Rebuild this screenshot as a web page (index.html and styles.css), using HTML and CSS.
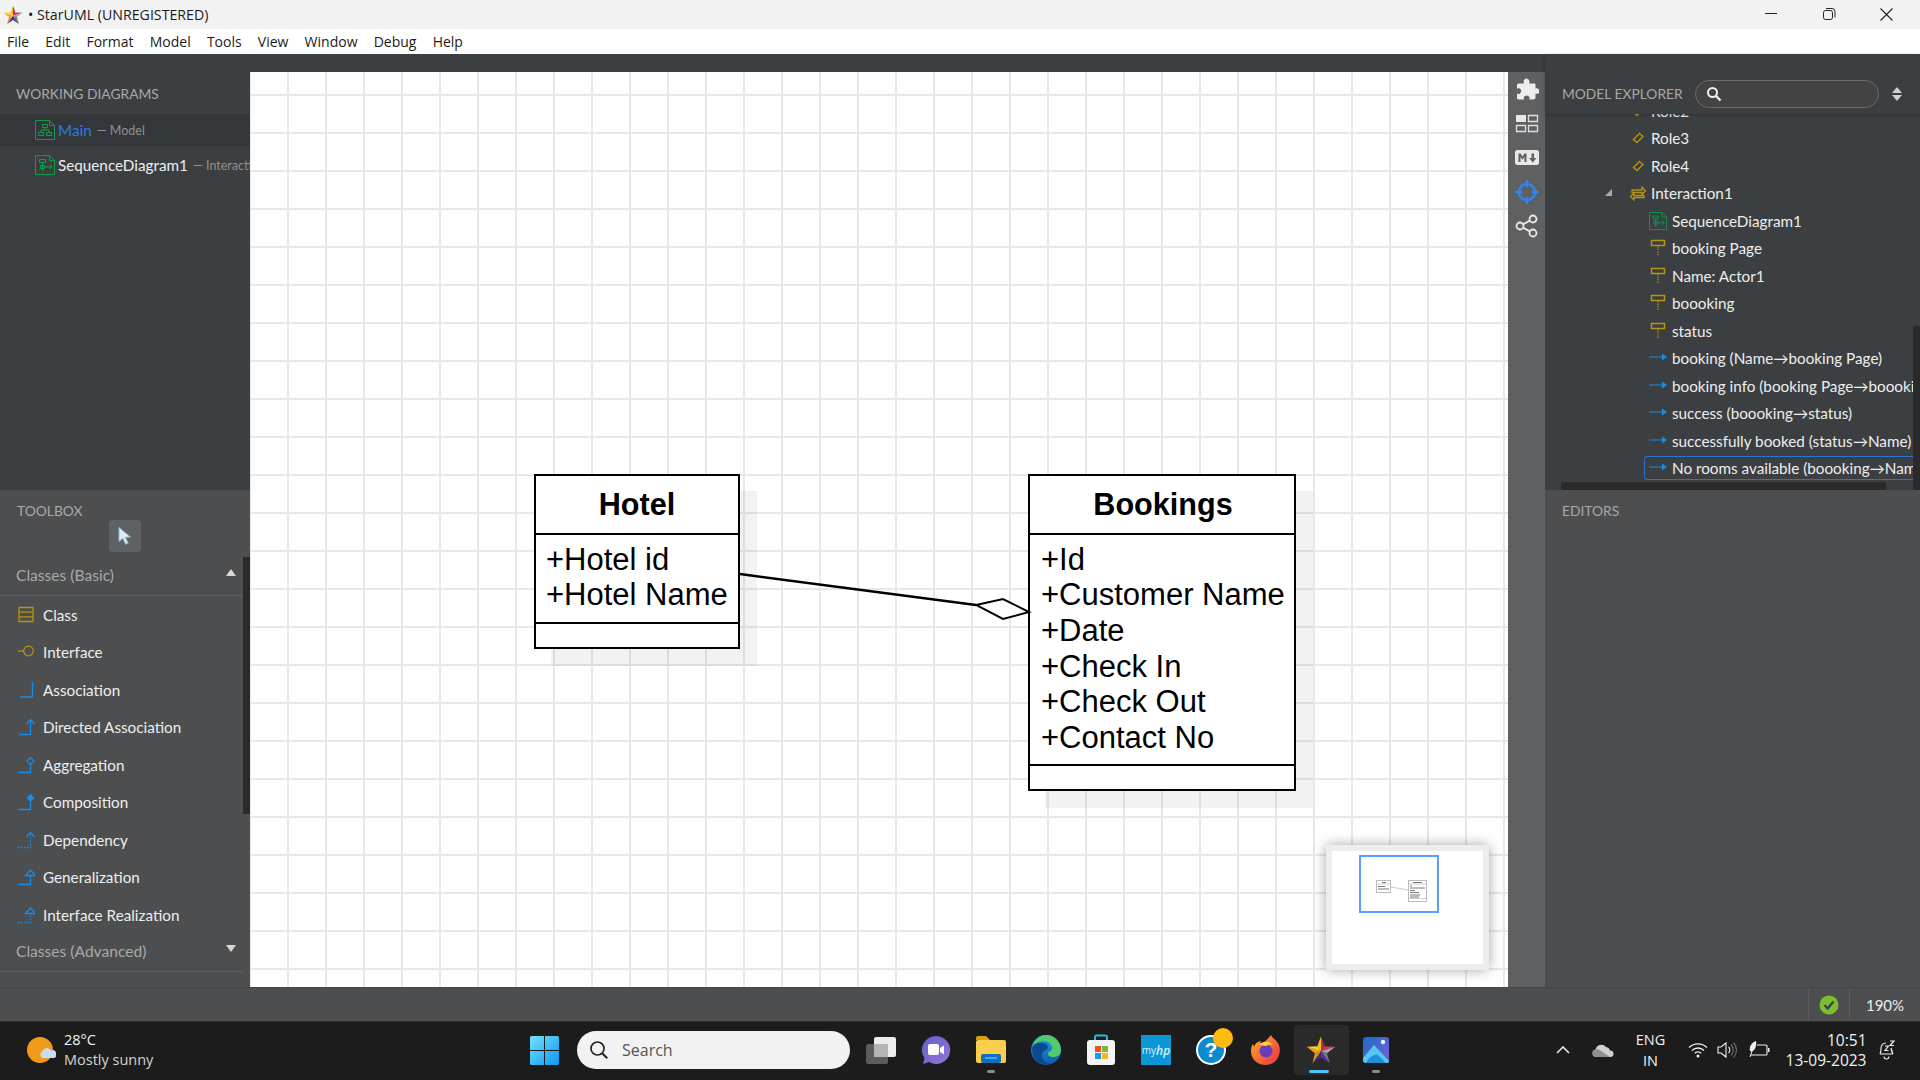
FILE: index.html
```html
<!DOCTYPE html>
<html lang="en">
<head>
  <meta charset="UTF-8" />
  <title>StarUML (UNREGISTERED)</title>
  <link rel="stylesheet" href="styles.css">
</head>
<body>
  <svg class="defs" width="0" height="0">
    <defs>
      <symbol id="star" viewBox="0 0 24 24">
        <polygon points="12,1 14.9,9 12,13" fill="#c2264f"/>
        <polygon points="12,1 9.1,9 12,13" fill="#f6c21c"/>
        <polygon points="14.9,9 23.4,9.3 12,13" fill="#d8344f"/>
        <polygon points="23.4,9.3 16.8,14.5 12,13" fill="#a9a9a9"/>
        <polygon points="16.8,14.5 19,22.7 12,13" fill="#77777c"/>
        <polygon points="19,22.7 12,18 12,13" fill="#5a2fa0"/>
        <polygon points="5,22.7 12,18 12,13" fill="#3a2a90"/>
        <polygon points="7.2,14.5 5,22.7 12,13" fill="#e0941a"/>
        <polygon points="0.6,9.3 7.2,14.5 12,13" fill="#f4a71e"/>
        <polygon points="9.1,9 0.6,9.3 12,13" fill="#fbd22e"/>
      </symbol>
      <symbol id="ic-model" viewBox="0 0 20 20">
        <path d="M.5.5h14l5 5v14H.5z M14.500.5v5h5" fill="none" stroke="#0f9b4a" stroke-width="1"/>
        <path d="M7.500 4.500h5v3h-5z M3.500 12.500h5v3h-5z M11.500 12.500h5v3h-5z M10 7.500v2.500 M6 12.500V10h8v2.500" fill="none" stroke="#0f9b4a" stroke-width="1"/>
      </symbol>
      <symbol id="ic-seq" viewBox="0 0 20 20">
        <path d="M.5.5h14l5 5v14H.5z M14.500.5v5h5" fill="none" stroke="#0f9b4a" stroke-width="1"/>
        <path d="M4.500 4.500h6v3h-6z M7.500 7.500v9 M5.500 10.500h4v3h-4z M9.500 12h7.500 M14.500 9.800l2.500 2.200-2.500 2.200" fill="none" stroke="#0f9b4a" stroke-width="1"/>
      </symbol>
      <symbol id="ic-role" viewBox="0 0 18 18">
        <path d="M10.500 4.500l3.500 3-6 6-3.500-3z" fill="none" stroke="#b8930f" stroke-width="1.400"/>
      </symbol>
      <symbol id="ic-inter" viewBox="0 0 18 18">
        <path d="M3 6h10V3l3.500 4-3.500 3.500V8.500H3z M15 11.500H5v-2.500L1.500 12.500 5 16v-2.500h10z" fill="none" stroke="#b8930f" stroke-width="1.300"/>
      </symbol>
      <symbol id="ic-life" viewBox="0 0 18 18">
        <path d="M2.500 1.500h13v5h-13z" fill="none" stroke="#b8930f" stroke-width="1.500"/>
        <path d="M9 7v10" fill="none" stroke="#b8930f" stroke-width="1.200" stroke-dasharray="1.500 1"/>
      </symbol>
      <symbol id="ic-msg" viewBox="0 0 18 18">
        <path d="M0 8h17 M13.500 5.500L17 8l-3.500 2.500z" fill="#1b8ce3" stroke="#1b8ce3" stroke-width="1.100"/>
      </symbol>
    </defs>
  </svg>

  <div class="window">
    <header class="titlebar">
      <svg class="title-star" width="20" height="20"><use href="#star"/></svg>
      <span class="title-text">• StarUML (UNREGISTERED)</span>
      <div class="win-btns">
        <svg width="58" height="29" viewBox="0 0 58 29"><path d="M24 13.500h12" stroke="#222" stroke-width="1"/></svg>
        <svg width="58" height="29" viewBox="0 0 58 29"><rect x="24.500" y="10.500" width="9" height="9" rx="2" fill="none" stroke="#222"/><path d="M27 8.500h6a3 3 0 0 1 3 3v6" fill="none" stroke="#222"/></svg>
        <svg width="58" height="29" viewBox="0 0 58 29"><path d="M23.500 8.500l12 12M35.500 8.500l-12 12" stroke="#222" stroke-width="1.100"/></svg>
      </div>
    </header>
    <nav class="menubar">
      <span>File</span><span>Edit</span><span>Format</span><span>Model</span><span>Tools</span><span>View</span><span>Window</span><span>Debug</span><span>Help</span>
    </nav>

    <main class="workspace">
      <aside class="sidebar">
        <section class="working">
          <h2 class="panel-title working-title">WORKING DIAGRAMS</h2>
          <div class="wd-row active">
            <svg width="20" height="20"><use href="#ic-model"/></svg>
            <span class="wd-name">Main</span><span class="wd-sub">— Model</span>
          </div>
          <div class="wd-row">
            <svg width="20" height="20"><use href="#ic-seq"/></svg>
            <span>SequenceDiagram1</span><span class="wd-sub">— Interaction1</span>
          </div>
        </section>
        <section class="toolbox">
          <h2 class="panel-title toolbox-title">TOOLBOX</h2>
          <button class="cursor-btn">
            <svg width="18" height="20" viewBox="0 0 18 20"><path d="M3 1.500v14l3.800-3.200 2.800 6 2.600-1.200-2.800-5.800 5-.4z" fill="#e8e8e8" stroke="#7cc4dc" stroke-width="1"/></svg>
          </button>
          <div class="tool-scroll"></div>
          <div class="tool-section"><span>Classes (Basic)</span><i class="tri up"></i></div>
          <div class="tool">
            <svg viewBox="0 0 18 18"><path d="M2 1.500h14v14H2z M2 6.200h14 M2 10.800h14" fill="none" stroke="#b8930f" stroke-width="1.300"/></svg>
            <span>Class</span>
          </div>
          <div class="tool">
            <svg viewBox="0 0 18 18"><circle cx="11.500" cy="8" r="4.800" fill="none" stroke="#b8930f" stroke-width="1.300"/><path d="M1 8h5.500" stroke="#b8930f" stroke-width="1.300"/></svg>
            <span>Interface</span>
          </div>
          <div class="tool">
            <svg viewBox="0 0 18 18"><path d="M3 16h12.500V1" fill="none" stroke="#1b8ce3" stroke-width="1.300"/></svg>
            <span>Association</span>
          </div>
          <div class="tool">
            <svg viewBox="0 0 18 18"><path d="M2 16.500h11.500V2 M9.500 6l4-4.500 4 4.500" fill="none" stroke="#1b8ce3" stroke-width="1.300"/></svg>
            <span>Directed Association</span>
          </div>
          <div class="tool">
            <svg viewBox="0 0 18 18"><path d="M1 16.500h12.500V8.500 M13.500 1.500l3.500 3.500-3.500 3.500L10 5z" fill="none" stroke="#1b8ce3" stroke-width="1.300"/></svg>
            <span>Aggregation</span>
          </div>
          <div class="tool">
            <svg viewBox="0 0 18 18"><path d="M1 16.500h12.500V8.500" fill="none" stroke="#1b8ce3" stroke-width="1.300"/><path d="M13.500 1l4 4-4 4-4-4z" fill="#1b8ce3"/></svg>
            <span>Composition</span>
          </div>
          <div class="tool">
            <svg viewBox="0 0 18 18"><path d="M1 16.500h12.500V2" fill="none" stroke="#1b8ce3" stroke-width="1.300" stroke-dasharray="1.500 1.500"/><path d="M9.500 6l4-4.500 4 4.500" fill="none" stroke="#1b8ce3" stroke-width="1.300"/></svg>
            <span>Dependency</span>
          </div>
          <div class="tool">
            <svg viewBox="0 0 18 18"><path d="M1 16.500h12.500V7.500 M8.500 7.500l5-5.500 5 5.500z" fill="none" stroke="#1b8ce3" stroke-width="1.300"/></svg>
            <span>Generalization</span>
          </div>
          <div class="tool">
            <svg viewBox="0 0 18 18"><path d="M1 16.500h12.500V7.500" fill="none" stroke="#1b8ce3" stroke-width="1.300" stroke-dasharray="1.500 1.500"/><path d="M8.500 7.500l5-5.500 5 5.500z" fill="none" stroke="#1b8ce3" stroke-width="1.300"/></svg>
            <span>Interface Realization</span>
          </div>
          <div class="tool-section"><span>Classes (Advanced)</span><i class="tri down"></i></div>
          <div class="tool-section cut"><span></span><i class="tri up"></i></div>
        </section>
      </aside>

      <div class="center">
        <div class="canvas">
          <div class="uml-class hotel">
            <div class="uml-name">Hotel</div>
            <div class="uml-attrs">
              <div>+Hotel id</div>
              <div>+Hotel Name</div>
            </div>
            <div class="uml-ops"></div>
          </div>
          <div class="uml-class bookings">
            <div class="uml-name">Bookings</div>
            <div class="uml-attrs">
              <div>+Id</div>
              <div>+Customer Name</div>
              <div>+Date</div>
              <div>+Check In</div>
              <div>+Check Out</div>
              <div>+Contact No</div>
            </div>
            <div class="uml-ops"></div>
          </div>
          <svg class="edge" width="800" height="100" viewBox="0 0 800 100">
            <path d="M8 12L244 43" stroke="#000" stroke-width="2.500"/>
            <path d="M244 43L271 37L297 50L271 57z" fill="#fff" stroke="#000" stroke-width="2"/>
          </svg>
          <div class="minimap">
            <div class="mini-view"></div>
            <svg class="mini-diagram" width="151" height="113" viewBox="0 0 151 113">
              <rect x="44.500" y="29.500" width="14" height="12" fill="#fff" stroke="#bbb"/>
              <path d="M45 33h13" stroke="#ccc"/>
              <path d="M50 31.500h4 M46 35.500h7 M46 38h11" stroke="#555" stroke-width=".8"/>
              <rect x="76.500" y="29.500" width="18" height="21" fill="#fff" stroke="#bbb"/>
              <path d="M77 33h17 M77 47.500h17" stroke="#ccc"/>
              <path d="M81 31.500h9 M78 35h2 M78 37h15 M78 39.500h5 M78 41.500h9 M78 44h10 M78 46h9" stroke="#555" stroke-width=".8"/>
              <path d="M59 36l17 3" stroke="#ccc"/>
            </svg>
          </div>
        </div>
      </div>

      <div class="sidetools">
        <div class="rail-slot"><svg width="24" height="24" viewBox="0 0 24 24"><path d="M9 2a3 3 0 0 1 5.500 1.500c0 .8-.3 1.200-.3 2h5.300a1 1 0 0 1 1 1v4.300c.7-.4 1.300-.6 2-.3a2.800 2.800 0 0 1 0 5.300c-.7.200-1.300-.1-2-.4v4.100a2 2 0 0 1-2 2h-4.300c.4-.8.6-1.500.2-2.400a3 3 0 0 0-5.400 0c-.4.900-.2 1.600.2 2.400H3.500a1.500 1.500 0 0 1-1.500-1.500v-4.500c.8.500 1.800.7 2.700.2a3 3 0 0 0 0-5.200c-.9-.5-1.900-.3-2.700.2V7a1.500 1.500 0 0 1 1.500-1.500h5.300C8.700 4.500 8.500 3 9 2z" fill="#eeeeee"/></svg></div>
        <div class="rail-slot"><svg width="24" height="20" viewBox="0 0 24 20"><path d="M1 1h10v7H1z" fill="#e8e8e8"/><path d="M13.500 1.500h9v6h-9z M1.500 11.500h9v6h-9z M13.500 11.500h9v6h-9z" fill="none" stroke="#e0e0e0" stroke-width="1.300"/></svg></div>
        <div class="rail-slot"><svg width="26" height="18" viewBox="0 0 26 18"><rect x="1" y="1" width="24" height="15" rx="2.500" fill="#e8e8e8"/><path d="M4.500 13V4.500h2l2 3 2-3h2V13h-2V8l-2 2.800L6.500 8v5z M17.500 4.500h2.500v4.500h2.500L18.800 13.500 15 9h2.500z" fill="#5f6062"/></svg></div>
        <div class="rail-slot"><svg width="26" height="26" viewBox="0 0 26 26"><circle cx="13" cy="13" r="8" fill="none" stroke="#2e86f0" stroke-width="2.400"/><path d="M13 1v7 M13 18v7 M1 13h7 M18 13h7" stroke="#2e86f0" stroke-width="2.400"/></svg></div>
        <div class="rail-slot"><svg width="24" height="24" viewBox="0 0 24 24"><circle cx="18" cy="5" r="3.500" fill="none" stroke="#eaeaea" stroke-width="1.800"/><circle cx="5" cy="12" r="3.500" fill="none" stroke="#eaeaea" stroke-width="1.800"/><circle cx="18" cy="19" r="3.500" fill="none" stroke="#eaeaea" stroke-width="1.800"/><path d="M8 10.300l7-3.700 M8 13.700l7 3.700" stroke="#eaeaea" stroke-width="1.800"/></svg></div>
      </div>

      <aside class="rightside">
        <section class="explorer">
          <div class="explorer-head">
            <h2 class="panel-title">MODEL EXPLORER</h2>
            <div class="search-box">
              <svg width="16" height="16" viewBox="0 0 16 16"><circle cx="6.500" cy="6.500" r="4.500" fill="none" stroke="#f0f0f0" stroke-width="2"/><path d="M10 10l4.500 4.500" stroke="#f0f0f0" stroke-width="2.400"/></svg>
            </div>
            <div class="sort-arrows"><i class="tri up"></i><i class="tri down"></i></div>
          </div>
          <div class="tree">
            <div class="row lv1"><svg><use href="#ic-role"/></svg><span>Role2</span></div>
            <div class="row lv1"><svg><use href="#ic-role"/></svg><span>Role3</span></div>
            <div class="row lv1"><svg><use href="#ic-role"/></svg><span>Role4</span></div>
            <div class="row lv1"><i class="expander"></i><svg><use href="#ic-inter"/></svg><span>Interaction1</span></div>
            <div class="row lv2"><svg><use href="#ic-seq"/></svg><span>SequenceDiagram1</span></div>
            <div class="row lv2"><svg><use href="#ic-life"/></svg><span>booking Page</span></div>
            <div class="row lv2"><svg><use href="#ic-life"/></svg><span>Name: Actor1</span></div>
            <div class="row lv2"><svg><use href="#ic-life"/></svg><span>boooking</span></div>
            <div class="row lv2"><svg><use href="#ic-life"/></svg><span>status</span></div>
            <div class="row lv2"><svg><use href="#ic-msg"/></svg><span>booking (Name→booking Page)</span></div>
            <div class="row lv2"><svg><use href="#ic-msg"/></svg><span>booking info (booking Page→boooking)</span></div>
            <div class="row lv2"><svg><use href="#ic-msg"/></svg><span>success (boooking→status)</span></div>
            <div class="row lv2"><svg><use href="#ic-msg"/></svg><span>successfully booked (status→Name)</span></div>
            <div class="row lv2 selected"><svg><use href="#ic-msg"/></svg><span>No rooms available (boooking→Name)</span></div>
            <div class="tree-vscroll"></div>
            <div class="tree-hscroll"></div>
          </div>
        </section>
        <section class="editors">
          <h2 class="panel-title">EDITORS</h2>
        </section>
      </aside>
    </main>

    <footer class="statusbar">
      <div class="status-cell check">
        <svg width="20" height="20" viewBox="0 0 20 20"><circle cx="10" cy="10" r="9.500" fill="#7ebd2f"/><path d="M5.500 10l3.200 3.500 5.800-7" fill="none" stroke="#3d4043" stroke-width="2.400"/></svg>
      </div>
      <div class="status-cell zoom">190%</div>
    </footer>

    <div class="taskbar">
      <div class="weather">
        <svg width="30" height="30" viewBox="0 0 30 30"><circle cx="14" cy="15" r="13" fill="#f09a1a"/><path d="M16 23a4 4 0 0 1 0-6.500 5 5 0 0 1 9-1 4 4 0 0 1 3 7.500z" fill="#c9dcf5"/></svg>
        <div class="weather-text">
          <div>28°C</div>
          <div class="weather-sub">Mostly sunny</div>
        </div>
      </div>
      <svg class="start" width="29" height="29" viewBox="0 0 29 29">
        <defs><linearGradient id="win" x1="0" y1="0" x2="1" y2="1"><stop offset="0" stop-color="#6fe3ff"/><stop offset="1" stop-color="#0f97f0"/></linearGradient></defs>
        <path d="M0 1.500A1.500 1.500 0 0 1 1.500 0H14v14H0z M15 0h12.500A1.500 1.500 0 0 1 29 1.500V14H15z M0 15h14v14H1.500A1.500 1.500 0 0 1 0 27.500z M15 15h14v12.500a1.500 1.500 0 0 1-1.500 1.500H15z" fill="url(#win)"/>
      </svg>
      <div class="task-search">
        <svg width="20" height="20" viewBox="0 0 20 20"><circle cx="8.500" cy="8.500" r="6.500" fill="none" stroke="#222" stroke-width="1.700"/><path d="M13.200 13.200l5 5" stroke="#222" stroke-width="2"/></svg>
        <span>Search</span>
      </div>
      <div class="task-icons">
        <div class="task-slot">
          <svg width="32" height="29" viewBox="0 0 32 29"><rect x="1" y="8" width="22" height="20" rx="2" fill="#5b5b5b"/><rect x="9" y="1" width="22" height="20" rx="2" fill="#ececec"/><rect x="9" y="8" width="14" height="13" fill="#b4b4b4"/></svg>
        </div>
        <div class="task-slot">
          <svg width="30" height="30" viewBox="0 0 30 30"><defs><linearGradient id="chat" x1="0" y1="0" x2="1" y2="1"><stop offset="0" stop-color="#5e63c4"/><stop offset="1" stop-color="#9a72d8"/></linearGradient></defs><path d="M15 1a14 14 0 1 1-7 26l-6 2 1.500-6A14 14 0 0 1 15 1z" fill="url(#chat)"/><rect x="7" y="9" width="11" height="11" rx="2" fill="#fff"/><path d="M19 13l4-2.500v9L19 17z" fill="#fff"/></svg>
        </div>
        <div class="task-slot running">
          <svg width="30" height="28" viewBox="0 0 30 28"><path d="M0 2a2 2 0 0 1 2-2h8l4 4H0z" fill="#dd9e0c"/><rect x="0" y="4" width="30" height="23" rx="2" fill="#fbcf4c"/><rect x="5" y="18" width="20" height="9" rx="2" fill="#0c6fc2"/><path d="M9 22h12" stroke="#5bb6f5" stroke-width="1.500"/></svg>
        </div>
        <div class="task-slot">
          <svg width="32" height="32" viewBox="0 0 32 32"><defs><linearGradient id="edge" x1="0" y1="0" x2="0" y2="1"><stop offset="0" stop-color="#1c9ee0"/><stop offset="1" stop-color="#0c5ca8"/></linearGradient></defs><circle cx="16" cy="16" r="15" fill="url(#edge)"/><path d="M16 1a15 15 0 0 1 15 15c0 5-4 7-8 7-3 0-5-1-5-3 0-3 4-2 4-6 0-4-4-7-9-7-4 0-9 3-11 8C3 7 9 1 16 1z" fill="#52c96f"/><path d="M2 15c0-4 5-7 10-6 5 0 7 4 5 6-3 2-6 3-5 8 .5 3 3 5 7 7-9 2-17-5-17-15z" fill="#0b4a8f"/></svg>
        </div>
        <div class="task-slot">
          <svg width="30" height="32" viewBox="0 0 30 32"><path d="M9 7V3a1.500 1.500 0 0 1 1.500-1.500h9A1.500 1.500 0 0 1 21 3v4" fill="none" stroke="#29b6e8" stroke-width="2"/><rect x="1" y="6" width="28" height="25" rx="3" fill="#f4f4f4"/><rect x="9" y="12" width="6" height="6" fill="#ea4f25"/><rect x="16" y="12" width="6" height="6" fill="#7db92f"/><rect x="9" y="19" width="6" height="6" fill="#1a9be8"/><rect x="16" y="19" width="6" height="6" fill="#fbb812"/></svg>
        </div>
        <div class="task-slot">
          <div class="myhp">my<em>hp</em></div>
        </div>
        <div class="task-slot help">
          <div class="help-ring">?</div>
          <i class="help-badge"></i>
        </div>
        <div class="task-slot">
          <svg width="30" height="30" viewBox="0 0 30 30"><defs><linearGradient id="fox" x1="0" y1="0" x2="1" y2="1"><stop offset="0" stop-color="#ffb21e"/><stop offset="1" stop-color="#e92c4a"/></linearGradient></defs><path d="M20 0c1 3 6 5 8 10 3 8-2 20-13 20C6 30 0 24 0 16c0-3 1-6 2-7l1 3c1-4 5-6 7-6-1 1-1 2 0 2 3 0 6-3 10-8z" fill="url(#fox)"/><circle cx="15" cy="16" r="6.500" fill="#6a3bc0"/><path d="M9 9c4-3 10-3 13 1-3-1-5 0-7 1-2 0-4-1-6-2z" fill="#ffcf3a"/></svg>
        </div>
        <div class="task-slot active">
          <svg width="30" height="30"><use href="#star"/></svg>
        </div>
        <div class="task-slot running">
          <svg width="26" height="26" viewBox="0 0 26 26"><defs><linearGradient id="pic" x1="0" y1="0" x2="1" y2="1"><stop offset="0" stop-color="#1c6ac8"/><stop offset="1" stop-color="#7c5fd8"/></linearGradient></defs><rect width="26" height="26" rx="3" fill="url(#pic)"/><circle cx="20" cy="5" r="2.200" fill="#e8f4ff"/><path d="M0 21L11 8l15 16a2 2 0 0 1-2 2H3a3 3 0 0 1-3-3z" fill="#58c6f2"/><path d="M3 26c3-6 8-9 12-8l8 8z" fill="#1d90d8"/></svg>
        </div>
      </div>
      <div class="tray">
        <svg class="tray-chevron" width="14" height="8" viewBox="0 0 14 8"><path d="M1 7l6-6 6 6" fill="none" stroke="#f0f0f0" stroke-width="1.500"/></svg>
        <svg class="tray-cloud" width="22" height="14" viewBox="0 0 22 14"><path d="M4 14a3.800 3.800 0 0 1-.5-7.500A6 6 0 0 1 14 4a4.800 4.800 0 0 1 4 3.500 3.300 3.300 0 0 1 1 6.500z" fill="#d0d0d0"/><path d="M4 14a3.800 3.800 0 0 1-.5-7.500 5 5 0 0 1 5 1L18 14z" fill="#909090"/></svg>
        <div class="tray-lang"><div>ENG</div><div>IN</div></div>
        <svg class="tray-wifi" width="20" height="16" viewBox="0 0 20 16"><path d="M1 5.500a13 13 0 0 1 18 0 M4 8.500a8.500 8.500 0 0 1 12 0 M6.800 11.200a4.500 4.500 0 0 1 6.400 0" fill="none" stroke="#f0f0f0" stroke-width="1.300"/><circle cx="10" cy="14" r="1.500" fill="#f0f0f0"/></svg>
        <svg class="tray-sound" width="20" height="18" viewBox="0 0 20 18"><path d="M1 6h3l5-4v14l-5-4H1z" fill="none" stroke="#f0f0f0" stroke-width="1.100"/><path d="M11.500 6a4 4 0 0 1 0 6" fill="none" stroke="#f0f0f0" stroke-width="1.100"/><path d="M14 3.500a8 8 0 0 1 0 11 M16.500 1.500a11 11 0 0 1 0 15" fill="none" stroke="#707070" stroke-width="1.100"/></svg>
        <svg class="tray-batt" width="21" height="18" viewBox="0 0 21 18"><path d="M8 4h9a1 1 0 0 1 1 1v8a1 1 0 0 1-1 1H2" fill="none" stroke="#f0f0f0" stroke-width="1.100"/><path d="M19 7h1.500v4H19z" fill="#f0f0f0"/><path d="M7 0C2 2 0 6 1 10l2 .5C6 9 8 5 7 0z" fill="#f0f0f0"/><path d="M3 10L1 16" stroke="#f0f0f0"/></svg>
        <div class="tray-clock"><div>10:51</div><div>13-09-2023</div></div>
        <svg class="tray-bell" width="18" height="20" viewBox="0 0 18 20"><path d="M2 14c1-2 1-3 1-6a5 5 0 0 1 5-5 M13 8c0 3 .5 4 2 6z M2 14h13 M6 16.500a2.500 2.500 0 0 0 5 0" fill="none" stroke="#f0f0f0" stroke-width="1.100"/><path d="M7 6h3.500L7 10.500h3.500 M12 1h4l-4 4.500h4" fill="none" stroke="#f0f0f0" stroke-width="1.200"/></svg>
      </div>
    </div>
  </div>
</body>
</html>
```

FILE: styles.css
```css
:root {
  --dark: #3b3f42;
  --panel: #4d4e50;
  --rail: #5f6062;
  --text: #eeeeee;
  --muted: #a8a9aa;
  --scroll: #2a2a2a;
}

* {
  box-sizing: border-box;
  margin: 0;
  padding: 0;
}

body {
  width: 1920px;
  height: 1080px;
  overflow: hidden;
  font-family: "Lato", "Noto Sans", sans-serif;
  font-size: 15.250px;
  color: var(--text);
}

.defs {
  position: absolute;
}

.window {
  display: flex;
  flex-direction: column;
  height: 1080px;
}

/* title + menu */
.titlebar {
  display: flex;
  align-items: center;
  height: 29px;
  background: #f2f2f2;
  color: #1b1b1b;
  font-family: "Open Sans", sans-serif;
  font-size: 14.200px;
  padding: 0 5px 0 3px;
}

.title-star {
  margin-right: 5px;
}

.win-btns {
  display: flex;
  margin-left: auto;
}

.menubar {
  display: flex;
  align-items: center;
  gap: 16.200px;
  height: 25px;
  padding-left: 7px;
  background: #fff;
  color: #1b1b1b;
  font-family: "Open Sans", sans-serif;
  font-size: 14px;
}

.workspace {
  display: flex;
  flex: 1;
  min-height: 0;
}

.panel-title {
  font-size: 13.800px;
  font-weight: 400;
  color: var(--muted);
}

/* left column */
.sidebar {
  width: 250px;
  display: flex;
  flex-direction: column;
  overflow: hidden;
}

.working {
  height: 436px;
  background: var(--dark);
}

.working-title {
  padding: 31px 0 0 16px;
  height: 60px;
  line-height: 18px;
}

.wd-row {
  display: flex;
  align-items: center;
  height: 32px;
  margin-bottom: 3px;
  padding-left: 35px;
  white-space: nowrap;
}

.wd-row svg {
  margin-right: 3px;
  flex-shrink: 0;
}

.wd-row.active {
  background: #33373a;
}

.wd-name {
  color: #2f78e6;
}

.wd-sub {
  margin-left: 5px;
  font-size: 12.500px;
  color: #8f9091;
}

.toolbox {
  position: relative;
  flex: 1;
  background: var(--panel);
  overflow: hidden;
}

.toolbox-title {
  padding: 12px 0 0 17px;
  height: 30px;
  line-height: 18px;
}

.cursor-btn {
  display: flex;
  align-items: center;
  justify-content: center;
  width: 32px;
  height: 32px;
  margin-left: 109px;
  background: #5f6164;
  border: none;
  border-radius: 4px;
}

.tool-scroll {
  position: absolute;
  left: 243px;
  top: 67px;
  width: 7px;
  height: 257px;
  background: var(--scroll);
}

.tool-section {
  display: flex;
  align-items: center;
  justify-content: space-between;
  width: 243px;
  height: 39px;
  margin-top: 5px;
  padding: 0 7px 2px 16px;
  border-bottom: 1px solid #5c5d5f;
  color: var(--muted);
  font-size: 15.600px;
}

.tool + .tool-section {
  margin-top: 0;
  height: 38.500px;
}

.tool-section.cut {
  margin-top: 0;
  height: 38px;
  padding-bottom: 0;
}

.tri {
  display: block;
  width: 0;
  height: 0;
  border-left: 5px solid transparent;
  border-right: 5px solid transparent;
  margin-bottom: 6px;
}

.tri.up {
  border-bottom: 7px solid #d8d8d8;
}

.tri.down {
  border-top: 7px solid #d8d8d8;
}

.tool-section.cut .tri {
  margin-bottom: 0;
}

.tool {
  display: flex;
  align-items: center;
  gap: 8px;
  width: 243px;
  height: 37.500px;
  padding-left: 17px;
}

.tool svg {
  width: 18px;
  height: 18px;
  flex-shrink: 0;
}

/* canvas */
.center {
  flex: 1;
  padding-top: 18px;
  background: var(--dark);
}

.canvas {
  position: relative;
  height: 100%;
  overflow: hidden;
  background-color: #fff;
  background-image:
    linear-gradient(#e8e8e8 2px, transparent 2px),
    linear-gradient(90deg, #e8e8e8 2px, transparent 2px);
  background-size: 38px 38px;
  background-position: 37px 22px;
}

.uml-class {
  position: absolute;
  top: 402px;
  display: flex;
  flex-direction: column;
  background: #fff;
  border: 2.500px solid #000;
  box-shadow: 17px 17px 0 rgba(0, 0, 0, 0.05);
  font-family: "Liberation Sans", sans-serif;
  font-size: 31px;
  color: #000;
}

.hotel {
  left: 284px;
  width: 206px;
  height: 175px;
}

.bookings {
  left: 778px;
  width: 268px;
  height: 317px;
}

.uml-name {
  height: 59px;
  flex-shrink: 0;
  line-height: 56px;
  text-align: center;
  font-size: 30.600px;
  font-weight: 700;
  border-bottom: 2.500px solid #000;
}

.uml-attrs {
  flex: 1;
  padding: 6.500px 0 0 10px;
  line-height: 35.700px;
  white-space: nowrap;
}

.bookings .uml-attrs {
  padding-left: 11px;
}

.bookings .uml-name {
  padding-left: 2px;
}

.uml-ops {
  height: 25px;
  flex-shrink: 0;
  border-top: 2.500px solid #000;
}

.edge {
  position: absolute;
  left: 482px;
  top: 490px;
}

.minimap {
  position: absolute;
  left: 1076px;
  top: 773px;
  width: 163px;
  height: 125px;
  background: #fff;
  border: 6px solid #ededed;
  box-shadow: 0 0 12px rgba(0, 0, 0, 0.35);
}

.mini-view {
  position: absolute;
  left: 27px;
  top: 4px;
  width: 80px;
  height: 58px;
  border: 2px solid #5b9dff;
}

.mini-diagram {
  position: absolute;
  left: 0;
  top: 0;
}

/* rail beside the canvas */
.sidetools {
  width: 37px;
  padding-top: 1px;
  border-top: 18px solid var(--dark);
  display: flex;
  flex-direction: column;
  background: var(--rail);
}

.rail-slot {
  display: flex;
  align-items: center;
  justify-content: center;
  height: 34px;
}

/* right column */
.rightside {
  width: 375px;
  display: flex;
  flex-direction: column;
}

.explorer {
  height: 436px;
  background: var(--dark);
  display: flex;
  flex-direction: column;
}

.explorer-head {
  display: flex;
  align-items: center;
  height: 60px;
  padding: 19px 0 0 17px;
  box-shadow: 0 1px 3px rgba(0, 0, 0, 0.25);
  background: var(--dark);
  position: relative;
  z-index: 1;
}

.search-box {
  display: flex;
  align-items: center;
  width: 184px;
  height: 28px;
  margin-left: 12px;
  padding-left: 10px;
  background: #434344;
  border: 1px solid #6a6b6c;
  border-radius: 14px;
}

.sort-arrows {
  display: flex;
  flex-direction: column;
  gap: 2px;
  margin-left: 13px;
}

.sort-arrows .tri {
  margin: 0;
}

.sort-arrows .tri.up,
.sort-arrows .tri.down {
  border-left-width: 5.500px;
  border-right-width: 5.500px;
  border-bottom-width: 6px;
  border-top-width: 6px;
  border-bottom-color: #cfcfcf;
  border-top-color: #cfcfcf;
}

.tree {
  position: relative;
  flex: 1;
  overflow: hidden;
}

.row {
  position: relative;
  display: flex;
  align-items: center;
  height: 27.500px;
  white-space: nowrap;
}

.row:first-child {
  margin-top: -17.250px;
}

.row svg {
  width: 18px;
  height: 18px;
  flex-shrink: 0;
}

.lv1 {
  padding-left: 84px;
  gap: 4px;
}

.lv2 {
  padding-left: 104px;
  gap: 5px;
}

.selected::before {
  content: "";
  position: absolute;
  left: 99px;
  right: 0;
  top: 2px;
  bottom: 2px;
  border: 1px solid #2a74d0;
  border-radius: 3px;
}

.expander {
  position: absolute;
  left: 60px;
  top: 10px;
  width: 0;
  height: 0;
  border-left: 7px solid transparent;
  border-bottom: 7px solid #a9aaab;
}

.tree-vscroll {
  position: absolute;
  right: 0;
  top: 212px;
  bottom: 0;
  width: 7px;
  background: var(--scroll);
}

.tree-hscroll {
  position: absolute;
  left: 16px;
  bottom: 0;
  width: 325px;
  height: 8px;
  background: var(--scroll);
}

.editors {
  flex: 1;
  padding: 12px 0 0 17px;
  background: var(--panel);
}

/* status bar */
.statusbar {
  display: flex;
  justify-content: flex-end;
  height: 34px;
  background: var(--panel);
  border-top: 1px solid #454648;
}

.status-cell {
  display: flex;
  align-items: center;
  justify-content: center;
  border-left: 1px solid #5a5b5d;
  margin: 1px 0;
}

.check {
  width: 41px;
}

.zoom {
  width: 71px;
  font-size: 15px;
}

/* windows taskbar */
.taskbar {
  display: flex;
  align-items: center;
  height: 59px;
  padding-bottom: 2px;
  background: #1c1c1c;
  border-top: 1px solid #2e2e2e;
  font-family: "Open Sans", sans-serif;
  font-size: 14.500px;
  color: #f2f2f2;
  position: relative;
}

.weather {
  display: flex;
  align-items: center;
  gap: 8px;
  width: 530px;
  padding-left: 26px;
}

.weather-text {
  line-height: 20px;
}

.weather-sub {
  color: #d4d4d4;
}

.task-search {
  display: flex;
  align-items: center;
  gap: 13px;
  width: 273px;
  height: 38px;
  margin-left: 18px;
  padding-left: 12px;
  background: #f2f2f2;
  border-radius: 19px;
  font-size: 16px;
  color: #555;
}

.task-icons {
  display: flex;
  margin-left: 3.500px;
}

.task-slot {
  position: relative;
  display: flex;
  align-items: center;
  justify-content: center;
  width: 55px;
  height: 50px;
}

.task-slot.running::after {
  content: "";
  position: absolute;
  left: 50%;
  bottom: 2px;
  width: 8px;
  height: 3px;
  margin-left: -4px;
  border-radius: 2px;
  background: #8d8d8d;
}

.task-slot.active {
  background: #2a2a2a;
  border-radius: 4px;
}

.task-slot.active::after {
  content: "";
  position: absolute;
  left: 15px;
  bottom: 2px;
  width: 20px;
  height: 3px;
  border-radius: 2px;
  background: #4cc2ff;
}

.myhp {
  display: flex;
  align-items: center;
  justify-content: center;
  width: 30px;
  height: 30px;
  background: #0c96d6;
  color: #d8f0fb;
  font-size: 10px;
}

.myhp em {
  font-size: 12px;
  font-weight: 600;
}

.help-ring {
  width: 30px;
  height: 30px;
  line-height: 25px;
  text-align: center;
  border: 2.500px solid #fff;
  border-radius: 50%;
  background: #0a8bd0;
  color: #fff;
  font-family: "Liberation Sans", sans-serif;
  font-weight: 700;
  font-size: 21px;
}

.help-badge {
  position: absolute;
  left: 29px;
  top: 3px;
  width: 20px;
  height: 20px;
  border-radius: 50%;
  background: #fdbb0f;
}

.tray {
  position: relative;
  flex: 1;
  display: flex;
  align-items: center;
  height: 100%;
}

.tray-chevron {
  margin-left: 152px;
}

.tray-cloud {
  margin-left: 22px;
}

.tray-lang {
  width: 40px;
  margin-left: 17px;
  text-align: center;
  line-height: 21px;
}

.tray-wifi {
  margin-left: 17px;
}

.tray-sound {
  margin-left: 9px;
}

.tray-batt {
  margin-left: 12px;
}

.tray-clock {
  width: 93px;
  margin-left: 4px;
  font-size: 15.500px;
  text-align: right;
  line-height: 20px;
  white-space: nowrap;
}

.tray-bell {
  margin-left: 11px;
}
```
